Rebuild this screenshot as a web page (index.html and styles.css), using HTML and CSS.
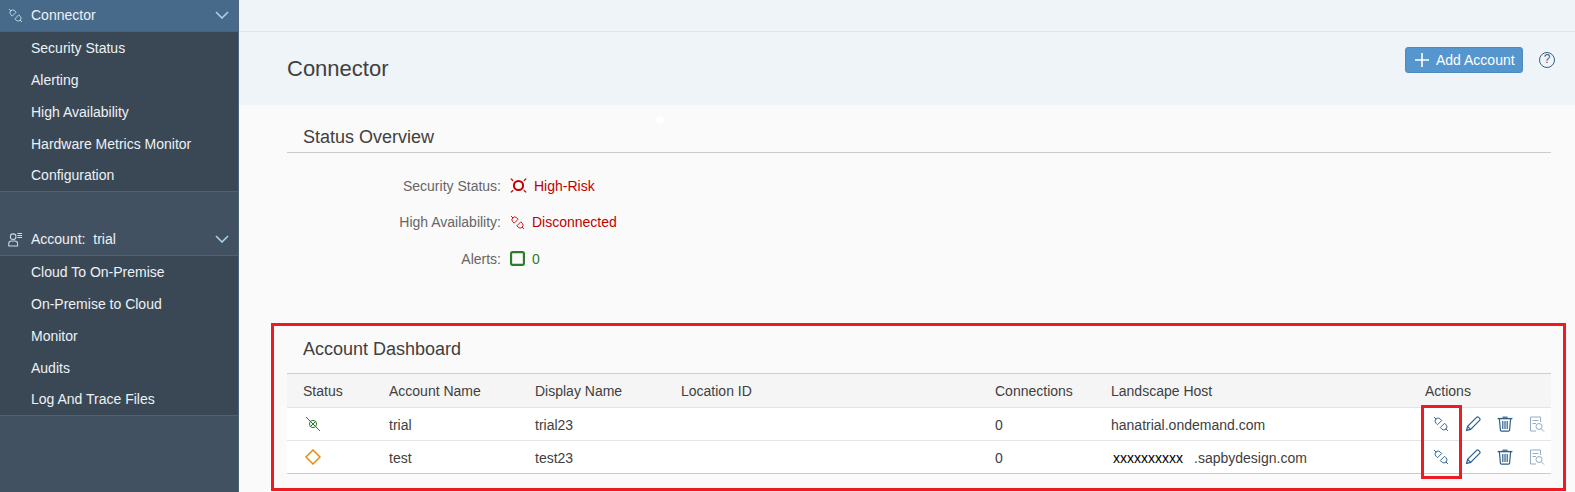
FILE: index.html

```html
<!DOCTYPE html>
<html lang="en">
<head>
  <meta charset="UTF-8">
  <title>Connector</title>
  <link rel="stylesheet" href="styles.css">
</head>
<body>
  <svg class="icon-defs" width="0" height="0">
    <symbol id="i-plug" viewBox="0 0 16 16">
      <g fill="none" stroke="currentColor" stroke-width="0.9" transform="rotate(45 8 8)">
        <path d="M-1.800 8H1.200M14.800 8H17.800"/>
        <path d="M6 5H3.900a3 3 0 0 0 0 6H6z"/>
        <path d="M10 5H12.100a3 3 0 0 1 0 6H10z"/>
      </g>
    </symbol>
    <symbol id="i-connected" viewBox="0 0 16 16">
      <g fill="none" stroke="currentColor" stroke-width="1">
        <path d="M1 1 15 15"/>
        <circle cx="8" cy="8" r="3.600"/>
        <path d="M5.500 10.500 10.500 5.500"/>
      </g>
    </symbol>
    <symbol id="i-person" viewBox="0 0 16 16">
      <g fill="none" stroke="currentColor" stroke-width="1.100">
        <circle cx="5.500" cy="5" r="3"/>
        <path d="M.8 15V12.500c0-1.600 1.200-3 3-3h3.400c1.800 0 3 1.400 3 3V15z"/>
        <path d="M10 1.500h5M10 3.700h5M10 5.900h5"/>
      </g>
    </symbol>
    <symbol id="i-chevron" viewBox="0 0 14 8">
      <path d="M1 1 7 7 13 1" fill="none" stroke="currentColor" stroke-width="1.600"/>
    </symbol>
    <symbol id="i-pencil" viewBox="0 0 16 16">
      <g fill="none" stroke="currentColor" stroke-width="1.200">
        <path d="M1.600 14.400 2.600 10.400 11.600 1.400c.6-.6 1.400-.6 2 0l1 1c.6.6.6 1.400 0 2l-9 9z"/>
        <path d="M2.600 10.400 5.600 13.400"/>
      </g>
    </symbol>
    <symbol id="i-trash" viewBox="0 0 16 16">
      <g fill="none" stroke="currentColor" stroke-width="1.200">
        <path d="M.6 2.600H15.400" stroke-width="1.400"/>
        <path d="M5.500 1.200h5"/>
        <path d="M2.400 3 3.400 14c0 .6.5 1.200 1.200 1.200h6.800c.7 0 1.200-.6 1.200-1.200L13.600 3"/>
        <path d="M5.800 5v8M8 5v8M10.200 5v8"/>
      </g>
    </symbol>
    <symbol id="i-review" viewBox="0 0 16 16">
      <g fill="none" stroke="currentColor" stroke-width="1">
        <path d="M11.500 6V1H1.500V15H7"/>
        <path d="M3.500 4.500H9.500M3.500 7.500H7"/>
        <circle cx="10" cy="10.500" r="3"/>
        <path d="M12.200 12.700 15 15.500"/>
      </g>
    </symbol>
  </svg>

  <div class="app">
    <nav class="sidebar">
      <div class="nav-group">
        <div class="nav-head nav-head-active">
          <svg class="nav-icon"><use href="#i-plug"/></svg>
          <span class="nav-title">Connector</span>
          <svg class="nav-chevron"><use href="#i-chevron"/></svg>
        </div>
        <ul class="nav-list">
          <li>Security Status</li>
          <li>Alerting</li>
          <li>High Availability</li>
          <li>Hardware Metrics Monitor</li>
          <li>Configuration</li>
        </ul>
      </div>
      <div class="nav-group">
        <div class="nav-head">
          <svg class="nav-icon"><use href="#i-person"/></svg>
          <span class="nav-title">Account:&nbsp; trial</span>
          <svg class="nav-chevron"><use href="#i-chevron"/></svg>
        </div>
        <ul class="nav-list">
          <li>Cloud To On-Premise</li>
          <li>On-Premise to Cloud</li>
          <li>Monitor</li>
          <li>Audits</li>
          <li>Log And Trace Files</li>
        </ul>
      </div>
    </nav>

    <main class="main">
      <div class="top-bar"></div>
      <header class="page-head">
        <h1>Connector</h1>
        <button class="btn-add" type="button">
          <svg class="btn-plus" viewBox="0 0 14 14"><path d="M7 0V14M0 7H14" stroke="currentColor" stroke-width="1.600"/></svg>
          Add Account
        </button>
        <span class="help">?</span>
      </header>

      <div class="content">
        <section class="overview">
          <h2>Status Overview</h2>
          <div class="status-row">
            <span class="status-label">Security Status:</span>
            <svg class="status-icon red" viewBox="0 0 17 15">
              <g fill="none" stroke="currentColor">
                <circle cx="8.500" cy="7.500" r="4.600" stroke-width="2"/>
                <path d="M.8 .6 3.200 2.800M16.200 .6 13.800 2.800M.8 14.400 3.200 12.200M16.200 14.400 13.800 12.200" stroke-width="1.200"/>
              </g>
            </svg>
            <span class="status-value red">High-Risk</span>
          </div>
          <div class="status-row">
            <span class="status-label">High Availability:</span>
            <svg class="status-icon status-icon-sm red"><use href="#i-plug"/></svg>
            <span class="status-value red">Disconnected</span>
          </div>
          <div class="status-row">
            <span class="status-label">Alerts:</span>
            <svg class="status-icon status-icon-sm green" viewBox="0 0 14 14">
              <rect x="1" y="1" width="12" height="12" rx="1.500" fill="none" stroke="currentColor" stroke-width="2"/>
            </svg>
            <span class="status-value green">0</span>
          </div>
        </section>

        <section class="dashboard">
          <h2>Account Dashboard</h2>
          <table class="accounts">
            <colgroup>
              <col class="col-status">
              <col class="col-name">
              <col class="col-name">
              <col class="col-location">
              <col class="col-conn">
              <col class="col-location">
              <col>
            </colgroup>
            <thead>
              <tr>
                <th>Status</th>
                <th>Account Name</th>
                <th>Display Name</th>
                <th>Location ID</th>
                <th>Connections</th>
                <th>Landscape Host</th>
                <th>Actions</th>
              </tr>
            </thead>
            <tbody>
              <tr>
                <td><svg class="row-status green"><use href="#i-connected"/></svg></td>
                <td>trial</td>
                <td>trial23</td>
                <td></td>
                <td>0</td>
                <td>hanatrial.ondemand.com</td>
                <td>
                  <div class="actions">
                    <svg class="act"><use href="#i-plug"/></svg>
                    <svg class="act"><use href="#i-pencil"/></svg>
                    <svg class="act"><use href="#i-trash"/></svg>
                    <svg class="act act-off"><use href="#i-review"/></svg>
                  </div>
                </td>
              </tr>
              <tr>
                <td>
                  <svg class="row-status orange" viewBox="0 0 16 16">
                    <path d="M8 1 15 8 8 15 1 8z" fill="none" stroke="currentColor" stroke-width="1.500"/>
                  </svg>
                </td>
                <td>test</td>
                <td>test23</td>
                <td></td>
                <td>0</td>
                <td><span class="redacted">xxxxxxxxxx</span>.sapbydesign.com</td>
                <td>
                  <div class="actions">
                    <svg class="act"><use href="#i-plug"/></svg>
                    <svg class="act"><use href="#i-pencil"/></svg>
                    <svg class="act"><use href="#i-trash"/></svg>
                    <svg class="act act-off"><use href="#i-review"/></svg>
                  </div>
                </td>
              </tr>
            </tbody>
          </table>
        </section>
      </div>
    </main>
  </div>

  <!-- white speck and red annotation boxes on top of the screenshot -->
  <div class="speck"></div>
  <div class="mark mark-dashboard"></div>
  <div class="mark mark-actions"></div>
</body>
</html>
```

FILE: styles.css

```css
* {
  box-sizing: border-box;
}
body {
  margin: 0;
  height: 492px;
  overflow: hidden;
  position: relative;
  font-family: "Liberation Sans", Arial, sans-serif;
  font-size: 14px;
  color: #404040;
  background-color: #fafafa;
}
.icon-defs {
  position: absolute;
}
.app {
  display: flex;
  height: 100%;
}

/* sidebar */
.sidebar {
  width: 239px;
  flex-shrink: 0;
  margin-top: -1px;
  background-color: #415161;
  border-right: 1px solid #4f6579;
  color: #eef1f4;
}
.nav-group {
  margin-bottom: 31px;
}
.nav-head {
  display: flex;
  align-items: center;
  height: 33px;
  padding-left: 8px;
  border-bottom: 1px solid #4c6277;
}
.nav-head-active {
  background-color: #486a8a;
}
.nav-icon {
  width: 15px;
  height: 15px;
  color: #c9dcec;
}
.nav-title {
  margin-left: 8px;
  flex: 1;
}
.nav-chevron {
  width: 14px;
  height: 8px;
  margin-right: 9px;
  color: #a9d0f0;
}
.nav-list {
  list-style: none;
  margin: 0;
  padding: 0;
  background-color: #3a4856;
  border-bottom: 1px solid #4c6277;
}
.nav-list li {
  display: flex;
  align-items: center;
  height: 32px;
  padding-left: 31px;
}
.nav-list li:last-child {
  height: 31px;
  padding-bottom: 2px;
}

/* page header */
.main {
  flex: 1;
  min-width: 0;
}
.top-bar {
  height: 32px;
  background-color: #eff4f9;
  border-bottom: 1px solid #dde6ef;
}
.page-head {
  display: flex;
  align-items: flex-start;
  height: 73px;
  padding: 15px 20px 0 48px;
  background-color: #eff4f9;
}
.page-head h1 {
  flex: 1;
  margin: 5px 0 0;
  font-size: 22px;
  line-height: 34px;
  font-weight: normal;
}
.btn-add {
  display: flex;
  align-items: center;
  gap: 7px;
  height: 26px;
  width: 118px;
  padding: 0 0 0 9px;
  font-family: inherit;
  font-size: 14px;
  color: #fff;
  background-color: #5496cd;
  border: 1px solid #4a8bc2;
  border-radius: 3px;
}
.btn-plus {
  width: 14px;
  height: 14px;
}
.help {
  width: 16px;
  height: 16px;
  margin: 5px 0 0 16px;
  border: 1.5px solid #346187;
  border-radius: 50%;
  color: #346187;
  font-size: 12px;
  line-height: 13px;
  text-align: center;
}

/* sections */
.content {
  padding: 0 24px 0 48px;
}
.content h2 {
  margin: 0;
  height: 31px;
  padding-left: 16px;
  font-size: 18px;
  line-height: 30px;
  font-weight: normal;
}
.overview {
  padding-top: 17px;
}
.overview h2 {
  border-bottom: 1px solid #ccc;
  margin-bottom: 14.5px;
}
.status-row {
  display: flex;
  align-items: center;
  height: 36.5px;
}
.status-label {
  width: 214px;
  text-align: right;
  color: #666;
}
.status-icon {
  width: 17px;
  height: 15px;
  margin-left: 9px;
}
.status-icon-sm {
  width: 15px;
  height: 15px;
}
.status-value {
  margin-left: 7px;
}
.red {
  color: #c00000;
}
.green {
  color: #2b7d2b;
}
.orange {
  color: #e78c07;
}

/* account table */
.dashboard {
  margin-top: 65px;
}
.dashboard h2 {
  line-height: 15px;
}
.accounts {
  width: 100%;
  table-layout: fixed;
  border-collapse: collapse;
  border-top: 1px solid #ccc;
  border-bottom: 1px solid #ccc;
}
.col-status {
  width: 86px;
}
.col-name {
  width: 146px;
}
.col-location {
  width: 314px;
}
.col-conn {
  width: 116px;
}
.accounts th {
  height: 34px;
  padding: 0 0 0 16px;
  text-align: left;
  font-weight: normal;
  background-color: #f5f5f5;
  border-bottom: 1px solid #e5e5e5;
}
.accounts td {
  height: 33px;
  padding: 2px 0 0 16px;
  background-color: #fff;
  border-top: 1px solid #e5e5e5;
}
.row-status {
  display: block;
  width: 16px;
  height: 16px;
  margin: -3px 0 0 2px;
}
.redacted {
  margin: 0 11px 0 2px;
  color: #000;
}
.actions {
  display: flex;
  gap: 16px;
  margin-top: -2px;
  padding-left: 8px;
}
.act {
  width: 16px;
  height: 16px;
  color: #2d5f8b;
}
.act-off {
  opacity: 0.5;
}

/* overlays */
.speck {
  position: absolute;
  left: 656px;
  top: 116px;
  width: 8px;
  height: 8px;
  border-radius: 50%;
  background-color: #fff;
}
.mark {
  position: absolute;
  border: 3px solid #ed1c24;
}
.mark-dashboard {
  left: 271px;
  top: 323px;
  width: 1295px;
  height: 168px;
}
.mark-actions {
  left: 1421px;
  top: 405px;
  width: 41px;
  height: 74px;
}
```
